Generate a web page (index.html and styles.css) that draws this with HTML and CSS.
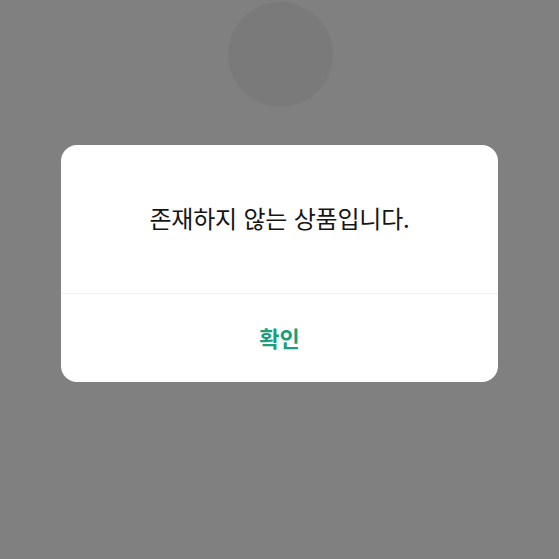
FILE: index.html
```html
<!DOCTYPE html>
<html lang="ko">
<head>
<meta charset="utf-8">
<link rel="stylesheet" href="styles.css">
</head>
<body>
<div class="screen">
  <div class="avatar"></div>
  <div class="dialog">
    <div class="message">존재하지 않는 상품입니다.</div>
    <div class="divider"></div>
    <button class="confirm">확인</button>
  </div>
</div>
</body>
</html>
```
FILE: styles.css
```css
html, body {
  margin: 0;
  padding: 0;
  background: #808080;
}
.screen {
  width: 559px;
  height: 559px;
  display: flex;
  flex-direction: column;
  align-items: center;
  font-family: "Noto Sans CJK KR", "Noto Sans", sans-serif;
}
.avatar {
  width: 105px;
  height: 105px;
  border-radius: 50%;
  background: #7a7a7a;
  margin-top: 2px;
  margin-left: 1px;
}
.dialog {
  margin-top: 38px;
  width: 437px;
  background: #ffffff;
  border-radius: 16px;
  display: flex;
  flex-direction: column;
  overflow: hidden;
}
.message {
  height: 148px;
  display: flex;
  align-items: center;
  justify-content: center;
  font-size: 24px;
  font-weight: 400;
  color: #151515;
  letter-spacing: -0.2px;
  padding-bottom: 3px;
  box-sizing: border-box;
}
.divider {
  height: 1px;
  background: #f0f0f0;
}
.confirm {
  height: 88px;
  border: 0;
  background: transparent;
  font-family: inherit;
  font-size: 22px;
  font-weight: 700;
  color: #1a9e7b;
  padding: 0;
  padding-bottom: 2px;
}
```
